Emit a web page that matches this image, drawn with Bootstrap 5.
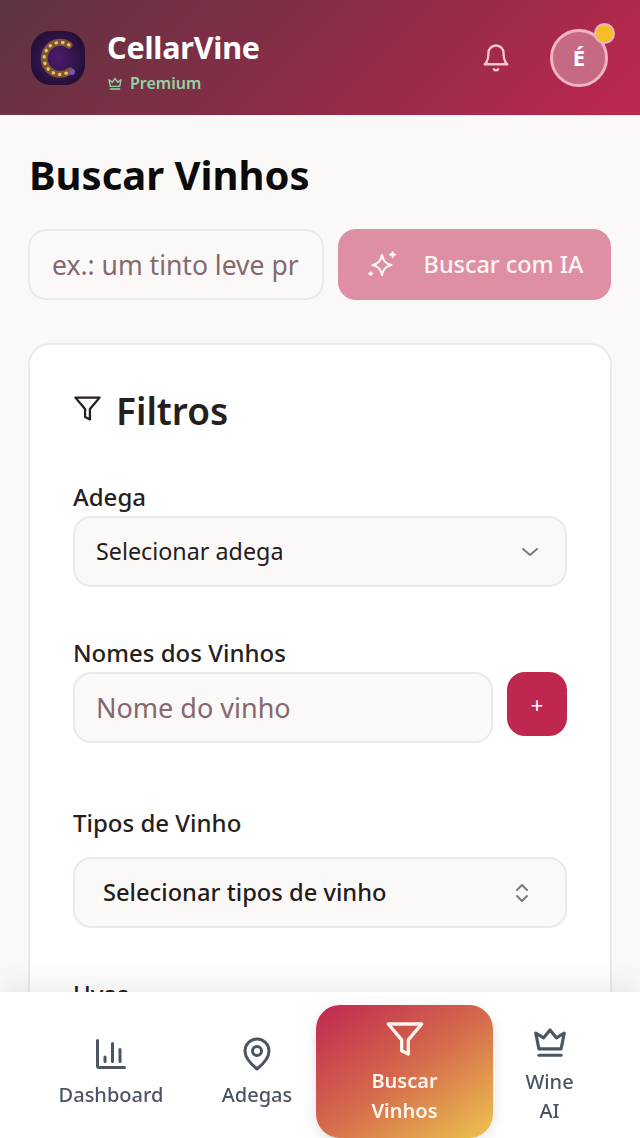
<!DOCTYPE html>
<html lang="pt-BR">
<head>
    <meta charset="UTF-8">
    <meta name="viewport" content="width=device-width, initial-scale=1.0">
    <title>CellarVine</title>
    <link href="https://cdn.jsdelivr.net/npm/bootstrap@5.3.0/dist/css/bootstrap.min.css" rel="stylesheet">
    <style>
        html, body { height: 100%; overflow: hidden; }
        body {
            background-color: #fbf9f7;
            font-family: "Noto Sans", "Open Sans", sans-serif;
            color: #241c1c;
        }
        .app-head {
            height: 115px;
            padding: 0 30px;
            background: linear-gradient(135deg, #5d3441 0%, #8f2c47 55%, #bf2750 100%);
        }
        .app-logo {
            width: 56px;
            height: 56px;
            margin-right: 21px;
        }
        .app-text { padding-top: 7px; }
        .app-name { font-size: 30.5px; font-weight: 700; line-height: 36px; color: #fff; letter-spacing: -.2px; }
        .app-plan { font-size: 16px; font-weight: 600; line-height: 22px; color: #8fd6a5; margin-top: 7px; }
        .app-plan svg { margin-right: 7px; }
        .bell-btn { margin-right: 39px; }
        .avatar-ring {
            width: 58px;
            height: 58px;
            border-radius: 50%;
            border: 3px solid #eeb4c2;
            background: #c66a84;
            color: #fff;
            font-weight: 700;
            font-size: 22px;
            margin-right: 2px;
        }
        .avatar-dot {
            position: absolute;
            top: -9px;
            right: -10px;
            width: 21px;
            height: 21px;
            border-radius: 50%;
            background: #f7bd24;
            border: 2px solid #eeb4c2;
        }
        .page-main { padding: 34px 28px 0 28px; }
        .page-title { font-size: 40px; font-weight: 700; line-height: 52px; color: #0b0b0b; margin: 0 0 28px 1px; }
        .ai-input {
            width: 296px;
            height: 71px;
            flex: none;
            border: 2px solid #efe9e6;
            border-radius: 18px;
            background: #fbf9f7;
            padding: 2px 22px 0;
            font-size: 26.5px;
            color: #84686e;
        }
        .ai-btn {
            width: 273px;
            height: 71px;
            flex: none;
            margin-left: 14px;
            padding-top: 1px;
            border: 0;
            border-radius: 18px;
            background: #de8fa3;
            color: #fff6f5;
            font-size: 23.4px;
            font-weight: 500;
            gap: 26px;
        }
        .filter-box {
            margin-top: 43px;
            border: 2px solid #efe9e6;
            border-radius: 22px;
            background: #fff;
            padding: 38px 43px 0;
            height: 794px;
        }
        .filter-title { font-size: 37px; font-weight: 600; line-height: 56px; gap: 14px; margin-bottom: 44px; color: #271e1e; }
        .filter-title svg { margin-top: -6px; }
        .field-label { font-size: 24px; font-weight: 500; line-height: 28px; margin-bottom: 5px; color: #271e1e; display: block; }
        .field-box {
            height: 71px;
            border: 2px solid #efe9e6;
            border-radius: 18px;
            background: #fbf9f7;
            font-size: 23.3px;
            padding: 0 23px 0 21px;
        }
        .field-gap { margin-bottom: 52px; }
        .name-row { margin-bottom: 66px; }
        .name-input { font-size: 27px; color: #84686e; width: 420px; flex: none; padding-top: 2px; }
        .add-btn {
            width: 60px;
            height: 64px;
            flex: none;
            border: 0;
            border-radius: 18px;
            background: #bf274f;
            color: #fff;
            font-size: 22px;
            margin-left: 14px;
        }
        .type-label { margin-bottom: 20px; }
        .type-box { padding: 0 31px 0 28px; font-size: 23.700px; font-weight: 500; }
        .grape-label { margin-top: 52px; }
        .bottom-bar {
            position: fixed;
            left: 0;
            right: 0;
            bottom: 0;
            height: 146px;
            background: #fff;
            box-shadow: 0 -12px 24px rgba(0, 0, 0, .06);
            padding: 13px 0 0 29px;
        }
        .tab-item {
            color: #4b5563;
            font-size: 20px;
            font-weight: 500;
            line-height: 30px;
            text-align: center;
        }
        .tab-dash { width: 164px; padding-top: 31px; }
        .tab-cellar { width: 123px; padding-top: 31px; padding-left: 5px; }
        .tab-search {
            width: 177px;
            height: 133px;
            border-radius: 24px;
            color: #fff5ee;
            font-weight: 600;
            background: linear-gradient(145deg, #bf2750 0%, #d56a4c 50%, #ecc44f 100%);
            box-shadow: 0 4px 14px rgba(0, 0, 0, .12);
            padding-top: 14px;
        }
        .tab-ai { width: 113px; padding-top: 17px; line-height: 29px; }
        .tab-item svg { display: block; margin: 0 auto 8px; }
        .tab-search svg { margin-bottom: 7px; }
        .tab-ai svg { margin-bottom: 7px; }
    </style>
</head>
<body>
    <header class="app-head d-flex align-items-center">
        <svg class="app-logo flex-shrink-0" viewBox="0 0 56 56">
            <defs>
                <radialGradient id="logoBg"><stop offset="0" stop-color="#4d1c70"/><stop offset="1" stop-color="#26103a"/></radialGradient>
            </defs>
            <rect x="1" y="1" width="54" height="54" rx="20" fill="url(#logoBg)"/>
            <path d="M39 15a16 16 0 1 0 1 26" fill="none" stroke="#7a5634" stroke-width="7" stroke-linecap="round"/>
            <path d="M39 15a16 16 0 1 0 1 26" fill="none" stroke="#efc264" stroke-width="3.200" stroke-linecap="round" stroke-dasharray="0.500 6"/>
            <circle cx="42" cy="42" r="3" fill="#7b4fc0"/>
        </svg>
        <div class="app-text">
            <div class="app-name">CellarVine</div>
            <div class="app-plan d-flex align-items-center">
                <svg width="16" height="16" viewBox="0 0 24 24" fill="none" stroke="currentColor" stroke-width="2" stroke-linejoin="round" stroke-linecap="round"><path d="M12 5l4 6 5-4-2 10H5L3 7l5 4z"/><path d="M5 21h14"/></svg>
                Premium
            </div>
        </div>
        <div class="ms-auto d-flex align-items-center">
            <svg class="bell-btn" width="30" height="32" viewBox="0 0 24 24" fill="none" stroke="#f6c6d2" stroke-width="1.9" stroke-linecap="round" stroke-linejoin="round"><path d="M6 8a6 6 0 0 1 12 0c0 7 3 9 3 9H3s3-2 3-9"/><path d="M10.300 21a2 2 0 0 0 3.400 0"/></svg>
            <div class="avatar-ring position-relative d-flex align-items-center justify-content-center">
                É
                <span class="avatar-dot"></span>
            </div>
        </div>
    </header>

    <main class="page-main">
        <h1 class="page-title">Buscar Vinhos</h1>
        <div class="d-flex">
            <div class="ai-input d-flex align-items-center overflow-hidden text-nowrap">ex.: um tinto leve pr</div>
            <button class="ai-btn d-flex align-items-center justify-content-center" type="button">
                <svg width="32" height="32" viewBox="0 0 24 24" fill="none" stroke="currentColor" stroke-width="1.700" stroke-linecap="round" stroke-linejoin="round"><path d="M12 4.500c.8 4.500 2.700 6.400 7 7.500-4.300 1.100-6.200 3-7 7.500-.8-4.500-2.700-6.400-7-7.500 4.300-1.100 6.200-3 7-7.500z"/><path d="M20 2.500v3.500M18.200 4.300h3.500M3.500 17.500v2M2.500 18.500h2"/></svg>
                Buscar com IA
            </button>
        </div>

        <section class="filter-box">
            <div class="filter-title d-flex align-items-center">
                <svg width="29" height="29" viewBox="0 0 24 24" fill="none" stroke="#271e1e" stroke-width="1.900" stroke-linecap="round" stroke-linejoin="round"><path d="M22 3H2l8 9.500V19l4 2v-8.500z"/></svg>
                Filtros
            </div>

            <label class="field-label">Adega</label>
            <div class="field-box field-gap d-flex align-items-center justify-content-between">
                Selecionar adega
                <svg width="24" height="24" viewBox="0 0 24 24" fill="none" stroke="#7f7a78" stroke-width="2" stroke-linecap="round" stroke-linejoin="round"><path d="M5 9l7 6 7-6"/></svg>
            </div>

            <label class="field-label">Nomes dos Vinhos</label>
            <div class="d-flex align-items-start name-row">
                <div class="field-box name-input d-flex align-items-center">Nome do vinho</div>
                <button class="add-btn" type="button">+</button>
            </div>

            <label class="field-label type-label">Tipos de Vinho</label>
            <div class="field-box type-box d-flex align-items-center justify-content-between">
                Selecionar tipos de vinho
                <svg width="24" height="26" viewBox="0 0 24 24" fill="none" stroke="#7f7a78" stroke-width="2" stroke-linecap="round" stroke-linejoin="round"><path d="M7 9l5-5 5 5M7 15l5 5 5-5"/></svg>
            </div>

            <label class="field-label grape-label">Uvas</label>
        </section>
    </main>

    <nav class="bottom-bar d-flex align-items-start">
        <div class="tab-item tab-dash">
            <svg width="36" height="36" viewBox="0 0 24 24" fill="none" stroke="currentColor" stroke-width="2" stroke-linecap="round" stroke-linejoin="round"><path d="M3 3v17a1 1 0 0 0 1 1h17"/><path d="M8 17v-3M13 17V5M18 17V9"/></svg>
            Dashboard
        </div>
        <div class="tab-item tab-cellar">
            <svg width="36" height="36" viewBox="0 0 24 24" fill="none" stroke="currentColor" stroke-width="2" stroke-linecap="round" stroke-linejoin="round"><path d="M20 10c0 5-5.500 10-8 12-2.500-2-8-7-8-12a8 8 0 0 1 16 0z"/><circle cx="12" cy="10" r="3"/></svg>
            Adegas
        </div>
        <div class="tab-item tab-search">
            <svg width="40" height="40" viewBox="0 0 24 24" fill="none" stroke="currentColor" stroke-width="2" stroke-linecap="round" stroke-linejoin="round"><path d="M22 3H2l8 9.500V19l4 2v-8.500z"/></svg>
            Buscar<br>Vinhos
        </div>
        <div class="tab-item tab-ai">
            <svg width="38" height="38" viewBox="0 0 24 24" fill="none" stroke="currentColor" stroke-width="2" stroke-linecap="round" stroke-linejoin="round"><path d="M12 5l4 5 5-3-2 10H5L3 7l5 3z"/><path d="M5 21h14"/></svg>
            Wine<br>AI
        </div>
    </nav>

    <script src="https://cdn.jsdelivr.net/npm/bootstrap@5.3.0/dist/js/bootstrap.bundle.min.js"></script>
</body>
</html>
